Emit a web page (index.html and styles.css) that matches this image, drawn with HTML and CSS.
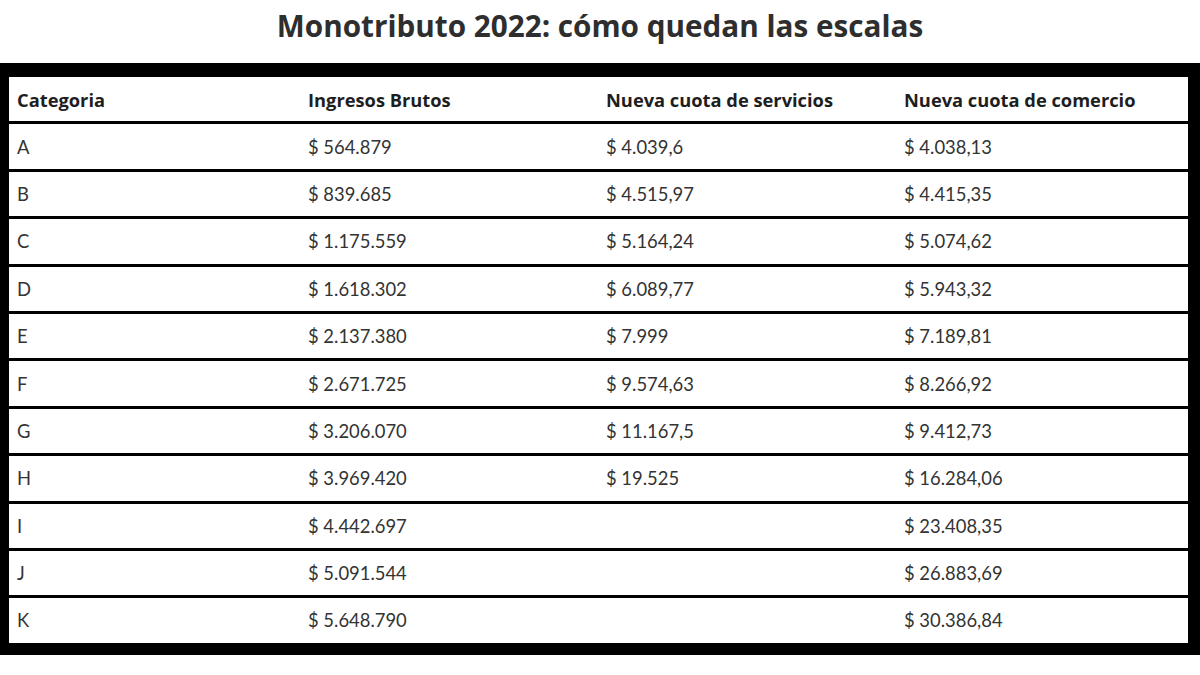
FILE: index.html
```html
<!DOCTYPE html>
<html lang="es">
<head>
<meta charset="utf-8">
<title>Monotributo 2022</title>
<link rel="stylesheet" href="styles.css">
</head>
<body>
<h1 class="title">Monotributo 2022: cómo quedan las escalas</h1>
<div class="frame">
  <div class="table">
    <div class="row head"><div class="cell">Categoria</div><div class="cell">Ingresos Brutos</div><div class="cell">Nueva cuota de servicios</div><div class="cell">Nueva cuota de comercio</div></div>
    <div class="row"><div class="cell">A</div><div class="cell">$ 564.879</div><div class="cell">$ 4.039,6</div><div class="cell">$ 4.038,13</div></div>
    <div class="row"><div class="cell">B</div><div class="cell">$ 839.685</div><div class="cell">$ 4.515,97</div><div class="cell">$ 4.415,35</div></div>
    <div class="row"><div class="cell">C</div><div class="cell">$ 1.175.559</div><div class="cell">$ 5.164,24</div><div class="cell">$ 5.074,62</div></div>
    <div class="row"><div class="cell">D</div><div class="cell">$ 1.618.302</div><div class="cell">$ 6.089,77</div><div class="cell">$ 5.943,32</div></div>
    <div class="row"><div class="cell">E</div><div class="cell">$ 2.137.380</div><div class="cell">$ 7.999</div><div class="cell">$ 7.189,81</div></div>
    <div class="row"><div class="cell">F</div><div class="cell">$ 2.671.725</div><div class="cell">$ 9.574,63</div><div class="cell">$ 8.266,92</div></div>
    <div class="row"><div class="cell">G</div><div class="cell">$ 3.206.070</div><div class="cell">$ 11.167,5</div><div class="cell">$ 9.412,73</div></div>
    <div class="row"><div class="cell">H</div><div class="cell">$ 3.969.420</div><div class="cell">$ 19.525</div><div class="cell">$ 16.284,06</div></div>
    <div class="row"><div class="cell">I</div><div class="cell">$ 4.442.697</div><div class="cell"></div><div class="cell">$ 23.408,35</div></div>
    <div class="row"><div class="cell">J</div><div class="cell">$ 5.091.544</div><div class="cell"></div><div class="cell">$ 26.883,69</div></div>
    <div class="row"><div class="cell">K</div><div class="cell">$ 5.648.790</div><div class="cell"></div><div class="cell">$ 30.386,84</div></div>
  </div>
</div>
</body>
</html>
```

FILE: styles.css
```css
html, body {
  margin: 0;
  padding: 0;
  background: #ffffff;
}
body {
  width: 1200px;
  height: 675px;
  overflow: hidden;
  font-family: Lato, "Liberation Sans", sans-serif;
  color: #333333;
}
.title {
  margin: 0;
  height: 63px;
  box-sizing: border-box;
  padding-top: 6px;
  text-align: center;
  font-family: "Open Sans", Lato, sans-serif;
  font-size: 29.7px;
  line-height: 40px;
  font-weight: 700;
  color: #2e2e2e;
}
.frame {
  background: #000000;
  padding: 14px 12px 12px 9px;
}
.table {
  display: flex;
  flex-direction: column;
  gap: 3px;
}
.row {
  display: grid;
  grid-template-columns: 291px 298px 298px 1fr;
  height: 44.4px;
  background: #ffffff;
  align-items: center;
}
.cell {
  padding-left: 8px;
  font-size: 18.4px;
  color: #333333;
}
.head .cell {
  font-family: "Open Sans", Lato, sans-serif;
  font-weight: 700;
  font-size: 18.3px;
  color: #1e1e1e;
}
```
